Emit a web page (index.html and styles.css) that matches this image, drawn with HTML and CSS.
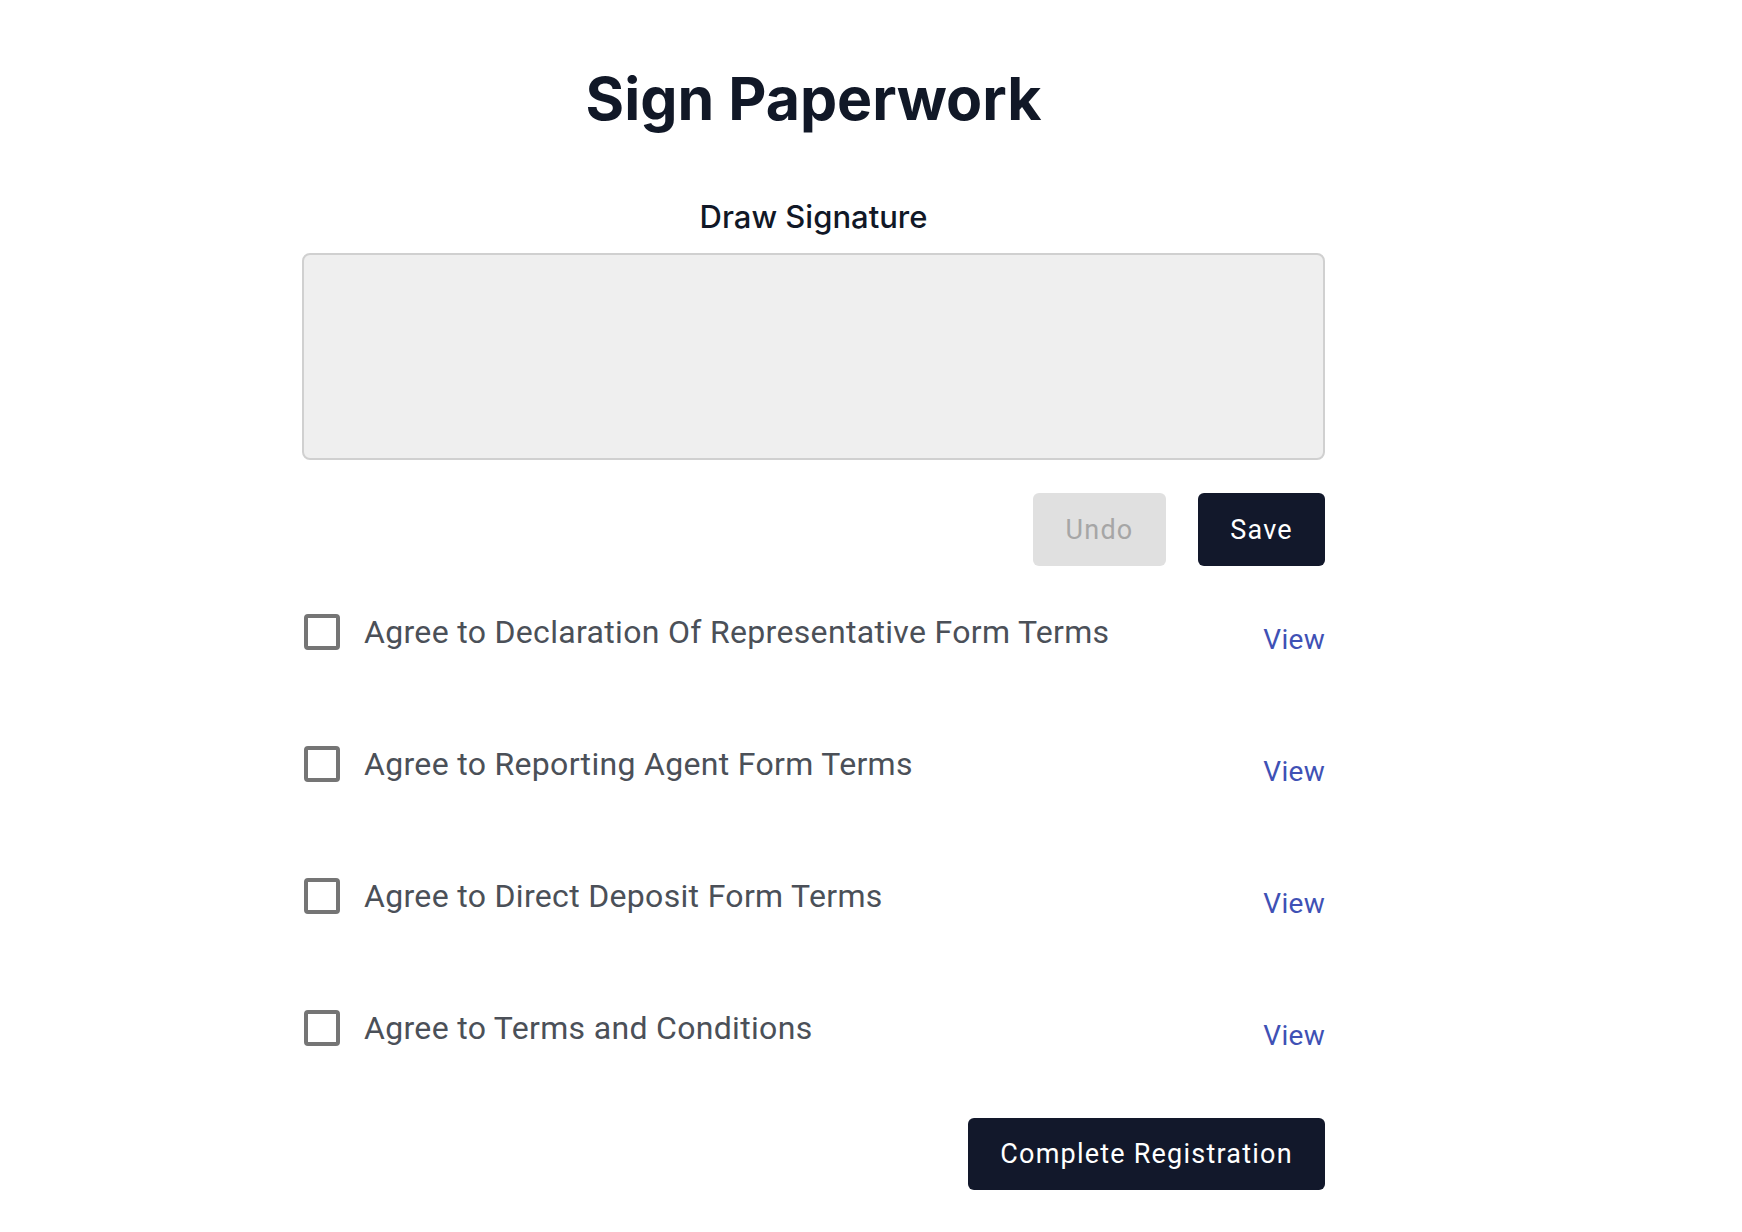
FILE: index.html
```html
<!DOCTYPE html>
<html lang="en">
<head>
<meta charset="utf-8">
<title>Sign Paperwork</title>
<link rel="stylesheet" href="styles.css">
</head>
<body>
<main class="page">
  <h1 class="title">Sign Paperwork</h1>
  <h2 class="subtitle">Draw Signature</h2>
  <div class="pad"></div>
  <div class="pad-actions">
    <button class="btn btn-disabled" disabled>Undo</button>
    <button class="btn btn-dark">Save</button>
  </div>
  <ul class="terms">
    <li class="term">
      <label class="term-label"><span class="box"></span><span class="term-text">Agree to Declaration Of Representative Form Terms</span></label>
      <a class="view" href="#">View</a>
    </li>
    <li class="term">
      <label class="term-label"><span class="box"></span><span class="term-text">Agree to Reporting Agent Form Terms</span></label>
      <a class="view" href="#">View</a>
    </li>
    <li class="term">
      <label class="term-label"><span class="box"></span><span class="term-text">Agree to Direct Deposit Form Terms</span></label>
      <a class="view" href="#">View</a>
    </li>
    <li class="term">
      <label class="term-label"><span class="box"></span><span class="term-text">Agree to Terms and Conditions</span></label>
      <a class="view" href="#">View</a>
    </li>
  </ul>
  <div class="footer-actions">
    <button class="btn btn-dark btn-wide">Complete Registration</button>
  </div>
</main>
</body>
</html>
```

FILE: styles.css
```css
html, body {
  margin: 0;
  padding: 0;
  background: #ffffff;
}

.page {
  width: 1023px;
  margin-left: 302px;
  padding-top: 60px;
  font-family: Roboto, "Liberation Sans", sans-serif;
}

.title {
  margin: 0;
  text-align: center;
  font-family: Inter, "Liberation Sans", sans-serif;
  font-weight: 700;
  font-size: 59px;
  line-height: 78px;
  color: #111827;
}

.subtitle {
  margin: 61px 0 0;
  text-align: center;
  font-family: Inter, "Liberation Sans", sans-serif;
  font-weight: 500;
  font-size: 31px;
  line-height: 36px;
  color: #111827;
}

.pad {
  margin-top: 18px;
  height: 203px;
  border: 2px solid #d0d0d0;
  border-radius: 8px;
  background: #efefef;
}

.pad-actions {
  display: flex;
  justify-content: flex-end;
  gap: 32px;
  margin-top: 33px;
}

.btn {
  font-family: Roboto, "Liberation Sans", sans-serif;
  font-size: 27px;
  letter-spacing: 0.045em;
  height: 73px;
  border: none;
  border-radius: 6px;
  padding: 0;
  cursor: pointer;
}

.btn-disabled {
  background: #e0e0e0;
  color: #a6a6a6;
  width: 133px;
}

.btn-dark {
  background: #12182b;
  color: #ffffff;
  width: 127px;
}

.btn-wide {
  width: 357px;
  height: 72px;
}

.terms {
  list-style: none;
  margin: 48px 0 0;
  padding: 0;
}

.term {
  display: flex;
  justify-content: space-between;
  align-items: flex-start;
  height: 132px;
}

.term-label {
  display: flex;
  align-items: flex-start;
  gap: 24px;
}

.box {
  flex: none;
  box-sizing: border-box;
  width: 36px;
  height: 36px;
  border: 4px solid #757575;
  border-radius: 4px;
  margin-left: 2px;
}

.term-text {
  font-size: 32px;
  line-height: 36px;
  color: #4b5058;
  letter-spacing: 0.01em;
}

.view {
  margin-top: 8px;
  font-size: 28px;
  line-height: 36px;
  color: #3f51b5;
  text-decoration: none;
  letter-spacing: 0.01em;
}

.footer-actions {
  display: flex;
  justify-content: flex-end;
  margin-top: -24px;
}
```
